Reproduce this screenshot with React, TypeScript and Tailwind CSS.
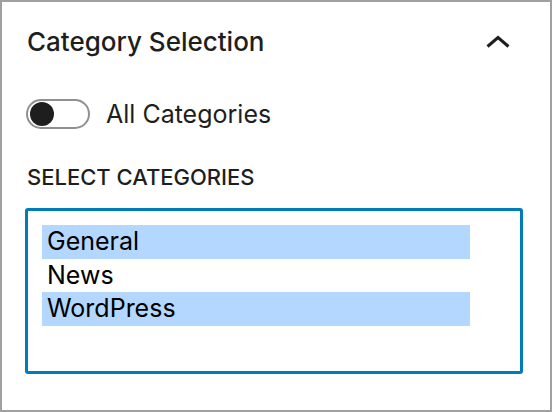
import React from "react";

export default function App() {
  const options = [
    { label: "General", selected: true },
    { label: "News", selected: false },
    { label: "WordPress", selected: true },
  ];
  return (
    <div
      className="w-[552px] h-[412px] border-2 border-[#a0a0a0] bg-white text-[#1e1e1e] pl-[23px] pr-[27px] flex flex-col"
      style={{ fontFamily: "Inter, 'Noto Sans', sans-serif" }}
    >
      <div className="h-[80px] flex items-center justify-between">
        <span className="text-[26px] font-medium leading-none ml-[2px]">Category Selection</span>
        <svg width="26" height="14" viewBox="0 0 26 14" className="mr-[12px]" fill="none">
          <polyline points="2.5,11.5 13,2.5 23.5,11.5" stroke="#1e1e1e" strokeWidth="3" />
        </svg>
      </div>
      <div className="h-[64px] flex items-center gap-[16px]">
        <div className="ml-[1px] w-[64px] h-[30px] rounded-full border-2 border-[#909090] flex items-center pl-[2px]">
          <div className="w-[24px] h-[24px] rounded-full bg-[#1e1e1e]" />
        </div>
        <span className="text-[25px] leading-none">All Categories</span>
      </div>
      <div className="h-[62px] flex items-center">
        <span className="text-[22px] font-medium uppercase leading-none ml-[2px]">Select Categories</span>
      </div>
      <div className="h-[166px] border-[3px] border-[#007cba] rounded-[3px] pt-[14px] pl-[14px]">
        <div className="w-[428px] flex flex-col">
          {options.map((o) => (
            <div
              key={o.label}
              className={`h-[33.5px] px-[5px] flex items-center text-[25px] text-black ${o.selected ? "bg-[#b3d7ff]" : ""}`}
            >
              {o.label}
            </div>
          ))}
        </div>
      </div>
    </div>
  );
}
